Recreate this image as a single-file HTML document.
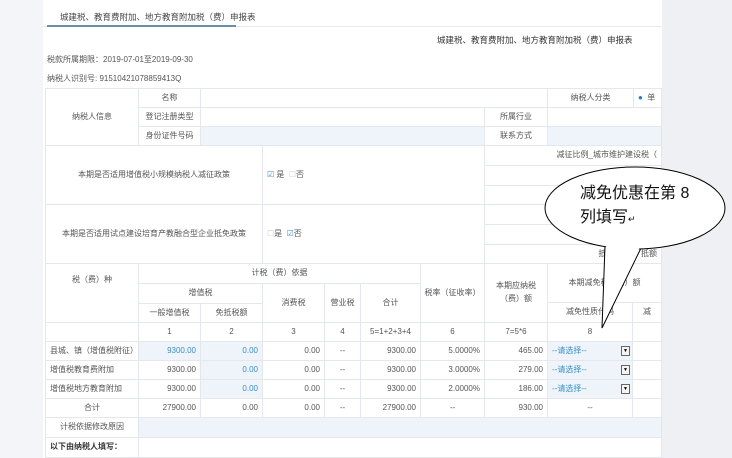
<!DOCTYPE html>
<html><head><meta charset="utf-8"><style>
*{margin:0;padding:0;box-sizing:border-box}
body{width:732px;height:458px;overflow:hidden;background:#fff;font-family:"Liberation Sans","Noto Sans CJK SC",sans-serif;position:relative;color:#555}
.a{position:absolute}
.c{position:absolute;border:1px solid #e4e7eb;display:flex;align-items:center;justify-content:center;font-size:8px;color:#555;text-align:center;line-height:1.6}
.r{justify-content:flex-end;padding-right:4px}
.l{justify-content:flex-start;padding-left:4px}
.b{background:#eef4fa}
.bt{color:#3a8fc7}
.sel{color:#3a8fc7}
.dd{position:absolute;right:2px;top:4px;width:9px;height:10px;border:1px solid #666;background:#f4f4f4;font-size:5px;line-height:8px;text-align:center;color:#000}
</style></head><body>
<div class="a" style="left:0;top:0;width:43px;height:458px;background:#f3f5f8"></div>
<div class="a" style="left:662px;top:0;width:70px;height:458px;background:#eef0f3"></div>
<div class="a" style="left:43px;top:26px;width:619px;height:1px;background:#e6e8eb"></div>
<div class="a" style="left:60px;top:11px;font-size:8.5px;color:#444">城建税、教育费附加、地方教育附加税（费）申报表</div>
<div class="a" style="left:47px;top:25px;width:189px;height:2px;background:#6b8fa8"></div>
<div class="a" style="left:437px;top:34px;font-size:8.5px;color:#333">城建税、教育费附加、地方教育附加税（费）申报表</div>
<div class="a" style="left:47px;top:54px;font-size:8px">税款所属期限：2019-07-01至2019-09-30</div>
<div class="a" style="left:47px;top:73px;font-size:8px">纳税人识别号: 91510421078859413Q</div>

<div class="c" style="left:45px;top:88px;width:94px;height:58px">纳税人信息</div>
<div class="c" style="left:138px;top:88px;width:63px;height:20px">名称</div>
<div class="c" style="left:138px;top:107px;width:63px;height:20px">登记注册类型</div>
<div class="c" style="left:138px;top:126px;width:63px;height:20px">身份证件号码</div>
<div class="c" style="left:200px;top:88px;width:348px;height:20px"></div>
<div class="c" style="left:547px;top:88px;width:87px;height:20px">纳税人分类</div>
<div class="c l" style="left:633px;top:88px;width:29px;height:20px"><span style="color:#2a7cc0">●</span>&nbsp;&nbsp;单</div>
<div class="c" style="left:200px;top:107px;width:285px;height:20px"></div>
<div class="c" style="left:484px;top:107px;width:64px;height:20px">所属行业</div>
<div class="c" style="left:547px;top:107px;width:115px;height:20px"></div>
<div class="c b" style="left:200px;top:126px;width:285px;height:20px"></div>
<div class="c" style="left:484px;top:126px;width:64px;height:20px">联系方式</div>
<div class="c b" style="left:547px;top:126px;width:115px;height:20px"></div>

<div class="c" style="left:45px;top:145px;width:218px;height:60px">本期是否适用增值税小规模纳税人减征政策</div>
<div class="c l" style="left:262px;top:145px;width:223px;height:60px"><span style="color:#3a8fc7">☑</span>&nbsp;是 &nbsp;<span style="color:#ccc">☐</span>否</div>
<div class="c r" style="left:484px;top:145px;width:178px;height:21px">减征比例_城市维护建设税（</div>
<div class="c" style="left:484px;top:165px;width:178px;height:21px"></div>
<div class="c" style="left:484px;top:185px;width:178px;height:20px"></div>
<div class="c" style="left:45px;top:204px;width:218px;height:60px">本期是否适用试点建设培育产教融合型企业抵免政策</div>
<div class="c l" style="left:262px;top:204px;width:223px;height:60px"><span style="color:#ccc">☐</span>是 &nbsp;<span style="color:#3a8fc7">☑</span>否</div>
<div class="c" style="left:484px;top:204px;width:178px;height:21px"></div>
<div class="c" style="left:484px;top:224px;width:178px;height:21px"></div>
<div class="c r" style="left:484px;top:244px;width:178px;height:20px">抵转&nbsp;&nbsp;&nbsp;&nbsp;&nbsp;&nbsp;&nbsp;&nbsp;&nbsp;&nbsp;&nbsp;&nbsp;抵额</div>

<div class="c" style="left:45px;top:263px;width:94px;height:60px;align-items:flex-start;padding-top:10px">税（费）种</div>
<div class="c" style="left:138px;top:263px;width:283px;height:21px">计税（费）依据</div>
<div class="c" style="left:138px;top:283px;width:125px;height:21px">增值税</div>
<div class="c" style="left:138px;top:303px;width:63px;height:20px">一般增值税</div>
<div class="c" style="left:200px;top:303px;width:63px;height:20px">免抵税额</div>
<div class="c" style="left:262px;top:283px;width:63px;height:40px">消费税</div>
<div class="c" style="left:324px;top:283px;width:37px;height:40px">营业税</div>
<div class="c" style="left:360px;top:283px;width:61px;height:40px">合计</div>
<div class="c" style="left:420px;top:263px;width:65px;height:60px">税率（征收率）</div>
<div class="c" style="left:484px;top:263px;width:64px;height:60px">本期应纳税<br>（费）额</div>
<div class="c" style="left:547px;top:263px;width:115px;height:40px">本期减免税（费）额</div>
<div class="c" style="left:547px;top:302px;width:86px;height:21px">减免性质代码</div>
<div class="c" style="left:632px;top:302px;width:30px;height:21px">减</div>

<div class="c" style="left:45px;top:322px;width:94px;height:20px"></div>
<div class="c" style="left:138px;top:322px;width:63px;height:20px">1</div>
<div class="c" style="left:200px;top:322px;width:63px;height:20px">2</div>
<div class="c" style="left:262px;top:322px;width:63px;height:20px">3</div>
<div class="c" style="left:324px;top:322px;width:37px;height:20px">4</div>
<div class="c" style="left:360px;top:322px;width:61px;height:20px">5=1+2+3+4</div>
<div class="c" style="left:420px;top:322px;width:65px;height:20px">6</div>
<div class="c" style="left:484px;top:322px;width:64px;height:20px">7=5*6</div>
<div class="c" style="left:547px;top:322px;width:86px;height:20px">8</div>
<div class="c" style="left:632px;top:322px;width:30px;height:20px"></div>

<!-- row 1 -->
<div class="c l" style="left:45px;top:341px;width:94px;height:20px">县城、镇（增值税附征）</div>
<div class="c r b bt" style="left:138px;top:341px;width:63px;height:20px">9300.00</div>
<div class="c r b bt" style="left:200px;top:341px;width:63px;height:20px">0.00</div>
<div class="c r" style="left:262px;top:341px;width:63px;height:20px">0.00</div>
<div class="c" style="left:324px;top:341px;width:37px;height:20px">--</div>
<div class="c r" style="left:360px;top:341px;width:61px;height:20px">9300.00</div>
<div class="c r" style="left:420px;top:341px;width:65px;height:20px">5.0000%</div>
<div class="c r" style="left:484px;top:341px;width:64px;height:20px">465.00</div>
<div class="c l b sel" style="left:547px;top:341px;width:86px;height:20px">--请选择--<span class="dd">▼</span></div>
<div class="c" style="left:632px;top:341px;width:30px;height:20px"></div>
<!-- row 2 -->
<div class="c l" style="left:45px;top:360px;width:94px;height:20px">增值税教育费附加</div>
<div class="c r" style="left:138px;top:360px;width:63px;height:20px">9300.00</div>
<div class="c r b bt" style="left:200px;top:360px;width:63px;height:20px">0.00</div>
<div class="c r" style="left:262px;top:360px;width:63px;height:20px">0.00</div>
<div class="c" style="left:324px;top:360px;width:37px;height:20px">--</div>
<div class="c r" style="left:360px;top:360px;width:61px;height:20px">9300.00</div>
<div class="c r" style="left:420px;top:360px;width:65px;height:20px">3.0000%</div>
<div class="c r" style="left:484px;top:360px;width:64px;height:20px">279.00</div>
<div class="c l b sel" style="left:547px;top:360px;width:86px;height:20px">--请选择--<span class="dd">▼</span></div>
<div class="c" style="left:632px;top:360px;width:30px;height:20px"></div>
<!-- row 3 -->
<div class="c l" style="left:45px;top:379px;width:94px;height:20px">增值税地方教育附加</div>
<div class="c r" style="left:138px;top:379px;width:63px;height:20px">9300.00</div>
<div class="c r b bt" style="left:200px;top:379px;width:63px;height:20px">0.00</div>
<div class="c r" style="left:262px;top:379px;width:63px;height:20px">0.00</div>
<div class="c" style="left:324px;top:379px;width:37px;height:20px">--</div>
<div class="c r" style="left:360px;top:379px;width:61px;height:20px">9300.00</div>
<div class="c r" style="left:420px;top:379px;width:65px;height:20px">2.0000%</div>
<div class="c r" style="left:484px;top:379px;width:64px;height:20px">186.00</div>
<div class="c l b sel" style="left:547px;top:379px;width:86px;height:20px">--请选择--<span class="dd">▼</span></div>
<div class="c" style="left:632px;top:379px;width:30px;height:20px"></div>
<!-- total -->
<div class="c" style="left:45px;top:398px;width:94px;height:20px">合计</div>
<div class="c r" style="left:138px;top:398px;width:63px;height:20px">27900.00</div>
<div class="c r" style="left:200px;top:398px;width:63px;height:20px">0.00</div>
<div class="c r" style="left:262px;top:398px;width:63px;height:20px">0.00</div>
<div class="c" style="left:324px;top:398px;width:37px;height:20px">--</div>
<div class="c r" style="left:360px;top:398px;width:61px;height:20px">27900.00</div>
<div class="c" style="left:420px;top:398px;width:65px;height:20px">--</div>
<div class="c r" style="left:484px;top:398px;width:64px;height:20px">930.00</div>
<div class="c" style="left:547px;top:398px;width:86px;height:20px">--</div>
<div class="c" style="left:632px;top:398px;width:30px;height:20px"></div>
<div class="c" style="left:45px;top:417px;width:94px;height:21px">计税依据修改原因</div>
<div class="c b" style="left:138px;top:417px;width:524px;height:21px"></div>
<div class="c l" style="left:45px;top:437px;width:94px;height:21px;font-weight:bold;color:#333">以下由纳税人填写：</div>
<div class="c" style="left:138px;top:437px;width:524px;height:21px"></div>

<svg class="a" style="left:0;top:0" width="732" height="458">
<polygon points="605,246 602,328 643,244" fill="#fff" stroke="#000" stroke-width="1"/>
<ellipse cx="635" cy="208" rx="90" ry="41" fill="#fff" stroke="#000" stroke-width="1"/>
<polygon points="606,246 603,320 641,245" fill="#fff"/>
</svg>
<div class="a" style="left:580px;top:182px;font-size:16px;color:#111;line-height:24px">减免优惠在第 8<br>列填写<span style="font-size:9px">↵</span></div>
</body></html>
